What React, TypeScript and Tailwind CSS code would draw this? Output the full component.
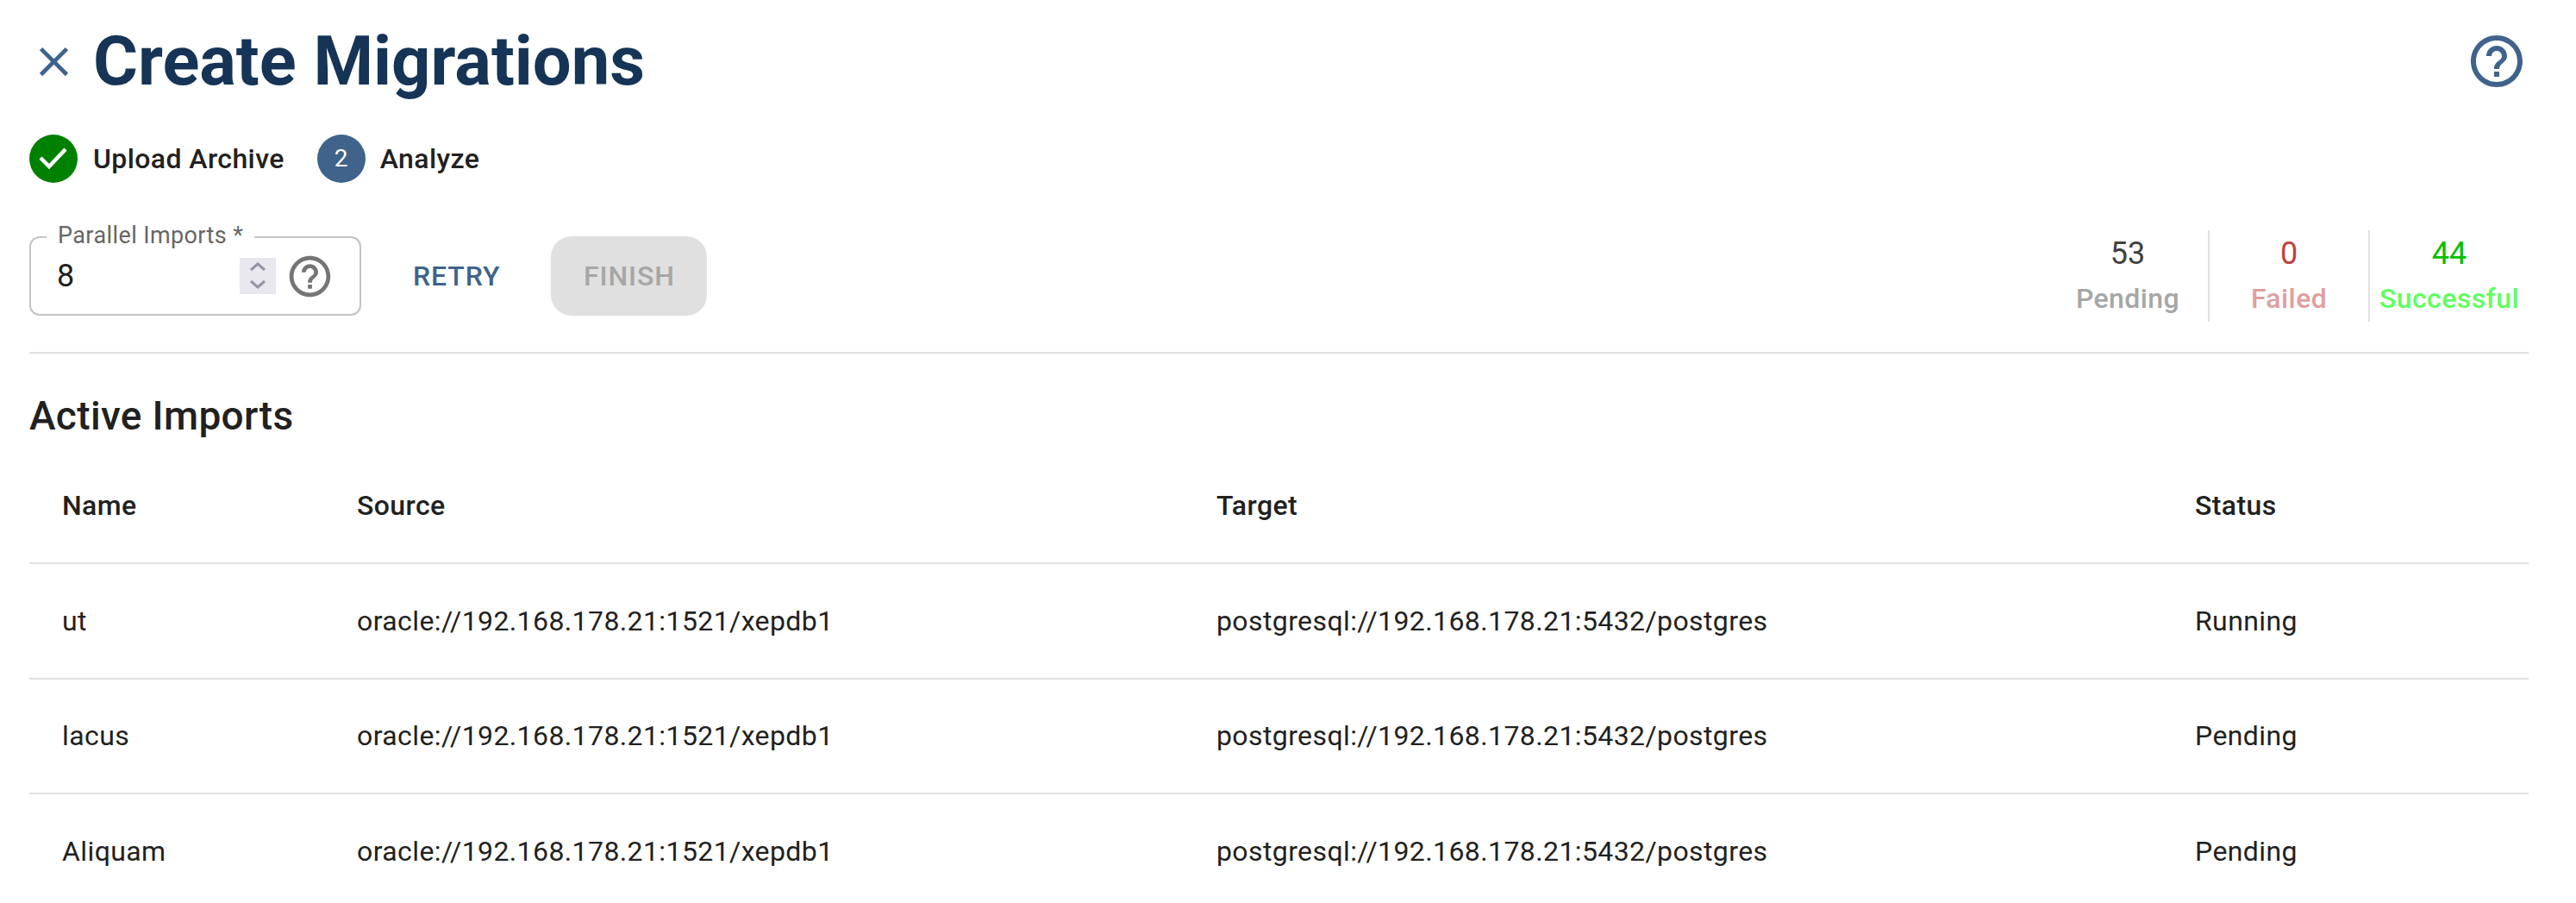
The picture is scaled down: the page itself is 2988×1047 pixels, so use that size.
import React from 'react';

const helpPath =
  'M11 18h2v-2h-2v2zm1-16C6.48 2 2 6.48 2 12s4.48 10 10 10 10-4.48 10-10S17.52 2 12 2zm0 18c-4.41 0-8-3.59-8-8s3.59-8 8-8 8 3.59 8 8-3.59 8-8 8zm0-14c-2.21 0-4 1.79-4 4h2c0-1.1.9-2 2-2s2 .9 2 2c0 2-3 1.75-3 5h2c0-2.25 3-2.5 3-5 0-2.21-1.79-4-4-4z';

const rows = [
  { name: 'ut', status: 'Running' },
  { name: 'lacus', status: 'Pending' },
  { name: 'Aliquam', status: 'Pending' }
];

function Icon({ d, className }: { d: string; className: string }) {
  return (
    <svg viewBox="0 0 24 24" fill="currentColor" className={className}>
      <path d={d} />
    </svg>
  );
}

function Stat({ value, label, valueClass, labelClass, border }: { value: string; label: string; valueClass: string; labelClass: string; border?: boolean }) {
  return (
    <div className={`flex h-[106px] w-[186px] flex-col items-center justify-center gap-[12px] ${border ? 'border-l-2 border-[#e0e0e0]' : ''}`}>
      <span className={`mt-[-3px] text-[36px] leading-[42px] ${valueClass}`}>{value}</span>
      <span className={`text-[32px] leading-[38px] font-medium tracking-[0.4px] ${labelClass}`}>{label}</span>
    </div>
  );
}

export default function App() {
  return (
    <div className="h-[1047px] overflow-hidden bg-white pl-[34px] pr-[55px] text-[#212121] font-['Roboto',sans-serif]">
      {/* Header */}
      <div className="flex h-[142px] items-center justify-between">
        <div className="flex items-center">
          <Icon d="M19 6.41 17.59 5 12 10.59 6.41 5 5 6.41 10.59 12 5 17.59 6.41 19 12 13.41 17.59 19 19 17.59 13.41 12z" className="mr-[17px] h-[57px] w-[57px] text-[#3f638b]" />
          <h1 className="text-[79.5px] leading-[94px] font-bold text-[#153456]">Create Migrations</h1>
        </div>
        <Icon d={helpPath} className="mr-[1px] h-[72px] w-[72px] text-[#3f638b]" />
      </div>

      {/* Stepper */}
      <div className="mt-[14px] flex h-[56px] items-center text-[32px] font-medium tracking-[0.4px]">
        <div className="flex h-[56px] w-[56px] items-center justify-center rounded-full bg-[#008000]">
          <svg viewBox="0 0 56 56" fill="none" stroke="white" strokeWidth="4.5" className="h-[56px] w-[56px]">
            <polyline points="13,27 23,37 42,17" />
          </svg>
        </div>
        <span className="ml-[18px] mr-[38px]">Upload Archive</span>
        <div className="flex h-[56px] w-[56px] items-center justify-center rounded-full bg-[#3f638b] text-[28px] font-normal text-white">2</div>
        <span className="ml-[17px]">Analyze</span>
      </div>

      {/* Controls */}
      <div className="mt-[62px] flex h-[92px] items-center justify-between">
        <div className="flex items-center">
          <div className="relative flex h-[92px] w-[385px] items-center rounded-[12px] border-2 border-[#c4c4c4] pl-[30px] pr-[29px]">
            <span className="absolute left-[18px] top-[-18px] bg-white px-[13px] text-[27px] leading-[30px] tracking-[0.4px] text-[#666666]">Parallel Imports *</span>
            <span className="text-[36px] leading-[42px]">8</span>
            <div className="ml-auto h-[42px] w-[42px] bg-[#e8e8ee]">
              <svg viewBox="0 0 42 42" fill="none" stroke="#9494a4" strokeWidth="3" className="h-[42px] w-[42px]">
                <polyline points="13,14 21,7 29,14" />
                <polyline points="13,27 21,34 29,27" />
              </svg>
            </div>
            <Icon d={helpPath} className="ml-[11px] h-[57px] w-[57px] text-[#757575]" />
          </div>
          <span className="ml-[60px] text-[32px] font-medium tracking-[0.9px] text-[#3f638b]">RETRY</span>
          <div className="ml-[59px] flex h-[92px] w-[181px] items-center justify-center rounded-[24px] bg-[#e0e0e0] text-[32px] font-medium tracking-[0.9px] text-[#a6a6a6]">FINISH</div>
        </div>
        <div className="flex items-center">
          <Stat value="53" label="Pending" valueClass="text-[#404040]" labelClass="text-[#a6a6a6]" />
          <Stat value="0" label="Failed" valueClass="text-[#bf4040]" labelClass="text-[#df9f9f]" border />
          <Stat value="44" label="Successful" valueClass="text-[#00bf00]" labelClass="text-[#5fff5f]" border />
        </div>
      </div>

      <div className="mt-[42px] h-[2px] bg-[#e0e0e0]" />

      <h2 className="mt-[46px] text-[46px] leading-[52px] font-medium tracking-[0.35px]">Active Imports</h2>

      {/* Table */}
      <table className="mt-[11px] w-full table-fixed border-collapse text-[32px] tracking-[0.4px]">
        <thead>
          <tr className="h-[134px] border-b-2 border-[#e0e0e0] text-left">
            <th className="w-[380px] pl-[38px] font-medium">Name</th>
            <th className="w-[997px] font-medium">Source</th>
            <th className="w-[1135px] font-medium">Target</th>
            <th className="font-medium">Status</th>
          </tr>
        </thead>
        <tbody>
          {rows.map((row) => (
            <tr key={row.name} className="h-[133.5px] border-b-2 border-[#e0e0e0]">
              <td className="pl-[38px]">{row.name}</td>
              <td>oracle://192.168.178.21:1521/xepdb1</td>
              <td>postgresql://192.168.178.21:5432/postgres</td>
              <td>{row.status}</td>
            </tr>
          ))}
        </tbody>
      </table>
    </div>
  );
}
